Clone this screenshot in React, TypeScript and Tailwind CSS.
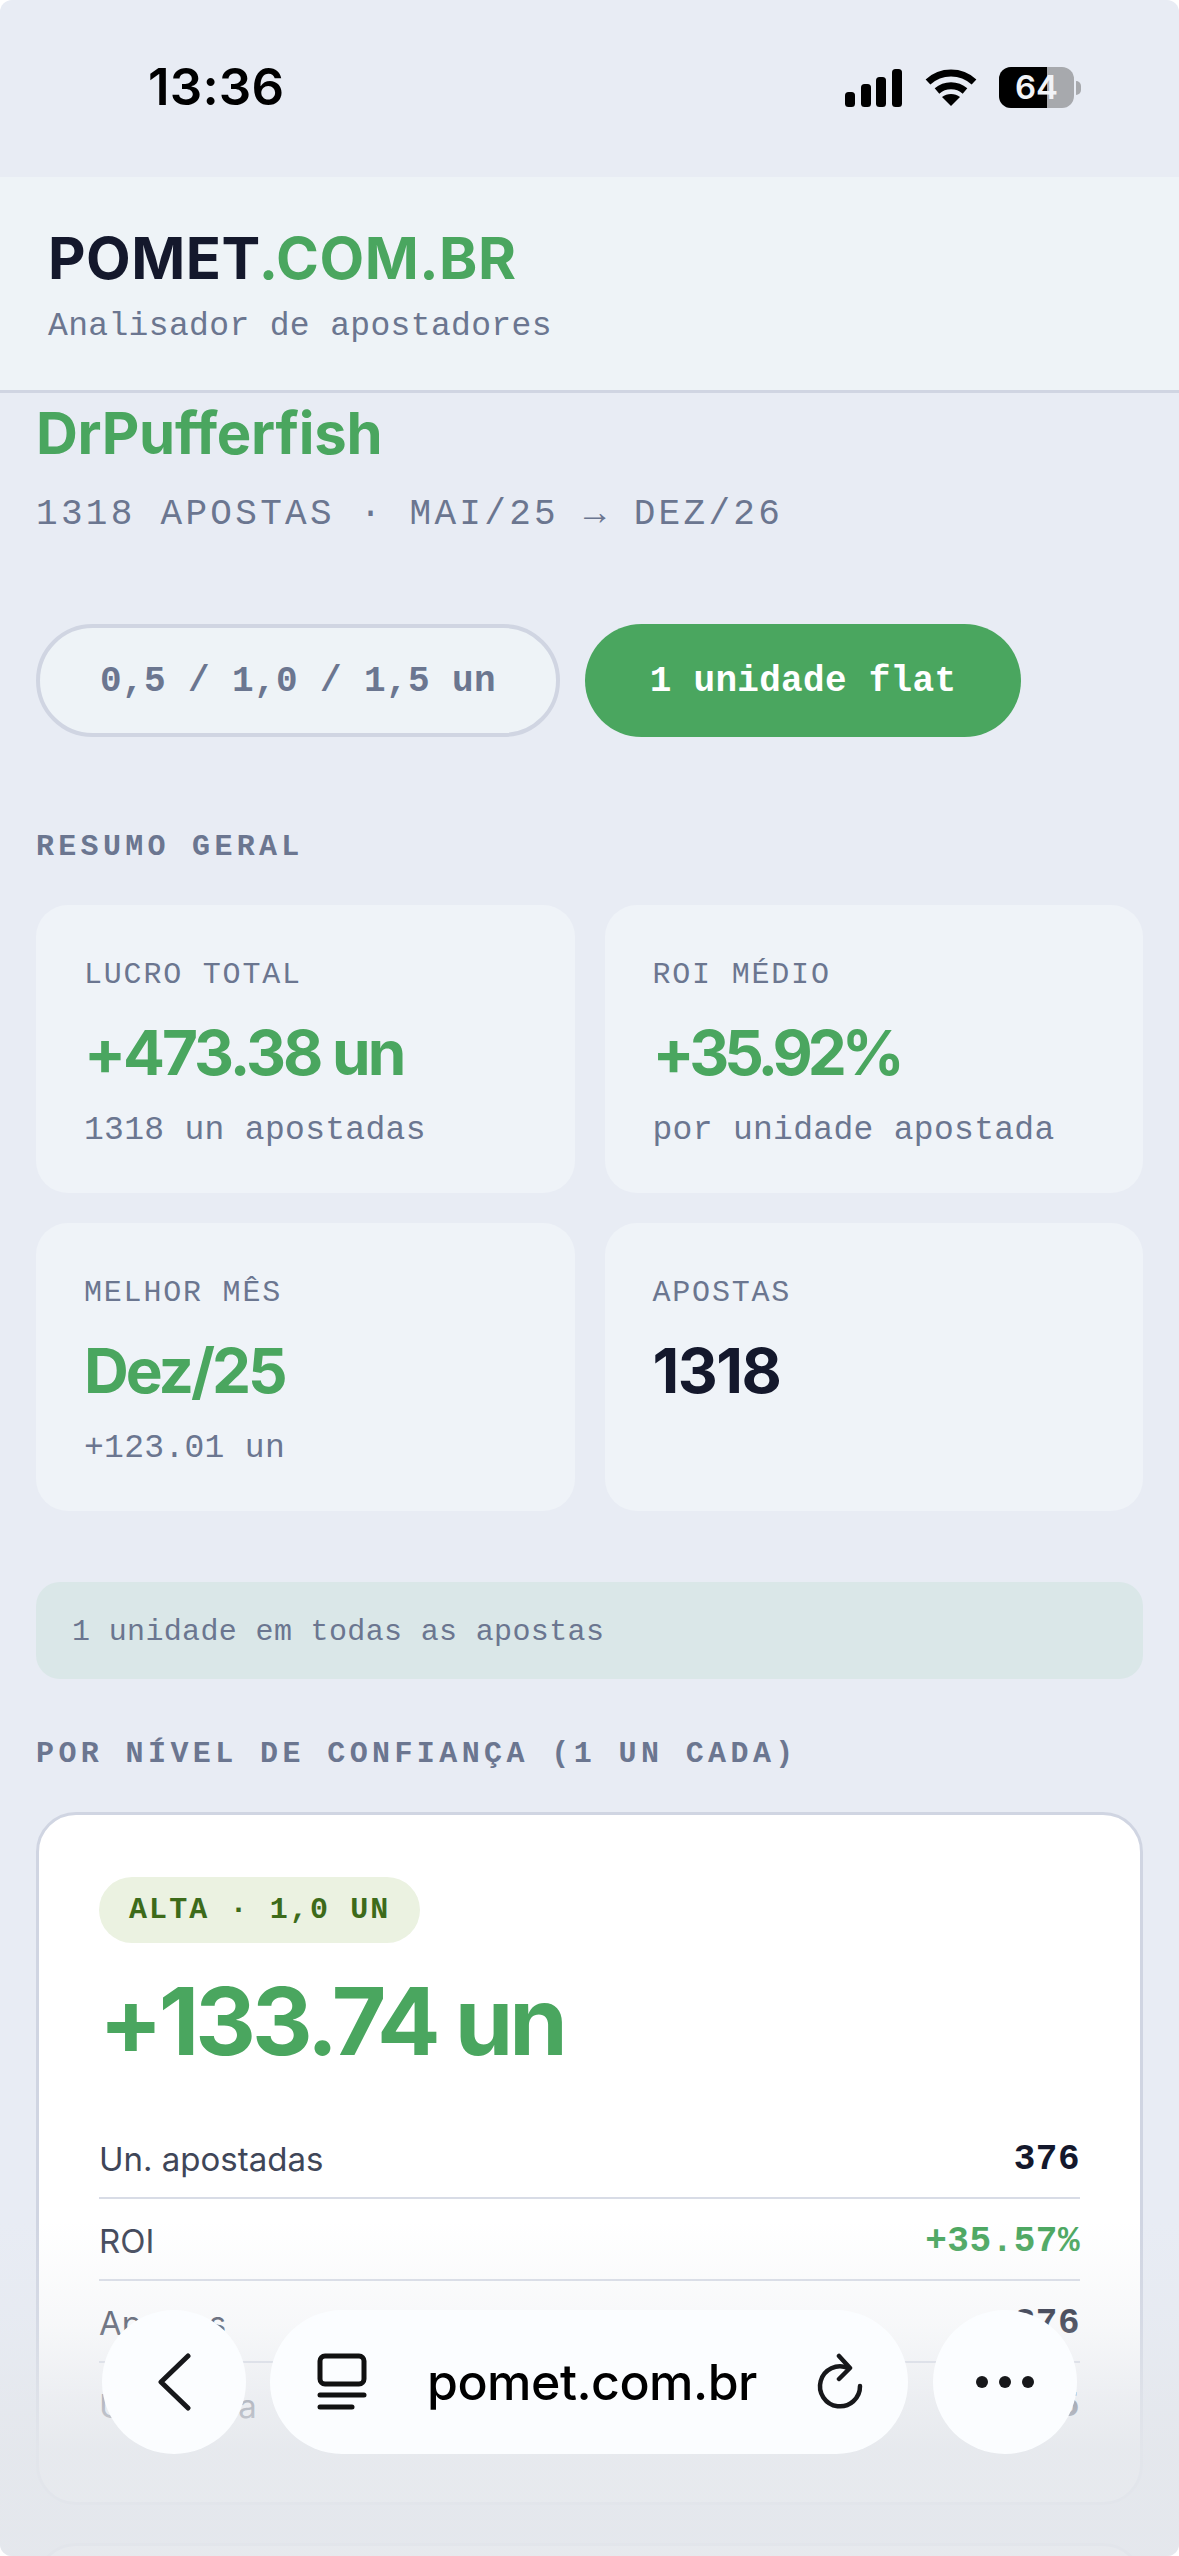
const sans = "font-['Inter','Liberation_Sans',sans-serif]";
const mono = "font-['Liberation_Mono','DejaVu_Sans_Mono',monospace]";

function StatCard({ label, value, sub, valueClass }: { label: string; value: string; sub?: string; valueClass: string }) {
  return (
    <div className="h-[288px] rounded-[32px] bg-[#eff3f8] pl-[48px] pt-[52px]">
      <div className={`${mono} text-[30px] leading-[36px] tracking-[1.8px] text-[#6b7690]`}>{label}</div>
      <div className={`${sans} mt-[24px] text-[62px] leading-[72px] font-bold ${valueClass}`}>{value}</div>
      {sub && <div className={`${mono} mt-[22px] text-[33px] leading-[40px] tracking-[0.3px] text-[#6b7690]`}>{sub}</div>}
    </div>
  );
}

function Row({ label, value, green, last }: { label: string; value: string; green?: boolean; last?: boolean }) {
  return (
    <div className={`flex h-[82px] items-center justify-between pt-[5px] ${last ? "" : "border-b-2 border-[#d8dce6]"}`}>
      <span className={`${sans} text-[33px] text-[#3f4658]`}>{label}</span>
      <span className={`${mono} text-[36px] font-bold tracking-[0.5px] ${green ? "text-[#4aa65f]" : "text-[#14182c]"}`}>{value}</span>
    </div>
  );
}

export default function App() {
  return (
    <div className="bg-white">
      <div className="relative h-[2556px] overflow-hidden rounded-[12px] bg-[#e8ecf4]">
        {/* status bar */}
        <div className="relative flex h-[177px] items-start justify-between pl-[148px] pr-[98px] pt-[55px]">
          <span className={`${sans} text-[51px] leading-[64px] font-semibold tracking-[0.2px] text-black`}>13:36</span>
          <div className="flex items-center gap-[22px] pt-[12px]">
            <svg width="58" height="38" viewBox="0 0 58 38" fill="black">
              <rect x="0" y="23" width="10" height="15" rx="3.5" />
              <rect x="16" y="15" width="10" height="23" rx="3.5" />
              <rect x="31" y="8" width="10" height="30" rx="3.5" />
              <rect x="47" y="0" width="10" height="38" rx="3.5" />
            </svg>
            <svg width="52" height="38" viewBox="0 0 52 38" fill="none" stroke="black" strokeWidth="7">
              <path d="M3 13 C16 1 36 1 49 13" />
              <path d="M12 22 C20 15 32 15 40 22" />
              <path d="M26 37 L17 28 C22 24 30 24 35 28 Z" fill="black" stroke="none" />
            </svg>
            <div className="flex items-center gap-[2px]">
              <div className="relative flex h-[41px] w-[75px] overflow-hidden rounded-[12px] bg-[#a7a9ad]">
                <div className="h-full w-[48px] bg-black" />
                <span className={`${sans} absolute inset-0 text-center text-[33px] leading-[41px] font-semibold text-[#f1f3f7]`}>64</span>
              </div>
              <div className="h-[14px] w-[5px] rounded-r-full bg-[#a7a9ad]" />
            </div>
          </div>
        </div>

        {/* header */}
        <header className="h-[216px] border-b-[3px] border-[#d0d5e2] bg-[#eef3f7] pl-[48px] pt-[46px]">
          <div className={`${sans} text-[58px] leading-[70px] font-bold tracking-[0.5px] text-[#14182c]`}>
            POMET<span className="text-[#4aa65f]">.COM.BR</span>
          </div>
          <div className={`${mono} mt-[14px] text-[33px] leading-[40px] tracking-[0.35px] text-[#6b7690]`}>Analisador de apostadores</div>
        </header>

        <main className="px-[36px]">
          <h1 className={`${sans} mt-[7px] text-[58px] leading-[66px] font-bold tracking-[-0.3px] text-[#4aa65f]`}>DrPufferfish</h1>
          <p className={`${mono} mt-[27px] text-[36px] leading-[44px] tracking-[3.3px] text-[#6b7690]`}>1318 APOSTAS · MAI/25 → DEZ/26</p>

          <div className="mt-[87px] flex gap-[25px]">
            <button className={`${mono} h-[113px] w-[524px] rounded-full border-[4px] border-[#d0d5e2] bg-[#eef3f7] pt-[2px] text-[36px] font-bold tracking-[0.4px] text-[#6b7690]`}>
              0,5 / 1,0 / 1,5 un
            </button>
            <button className={`${mono} h-[113px] w-[436px] rounded-full bg-[#4aa65f] pt-[2px] text-[36px] font-bold tracking-[0.3px] text-white`}>1 unidade flat</button>
          </div>

          <h2 className={`${mono} mt-[92px] text-[30px] leading-[36px] font-bold tracking-[4.3px] text-[#6b7690]`}>RESUMO GERAL</h2>

          <div className="mt-[40px] grid grid-cols-2 gap-[30px]">
            <StatCard label="LUCRO TOTAL" value="+473.38 un" sub="1318 un apostadas" valueClass="tracking-[-3px] text-[#4aa65f]" />
            <StatCard label="ROI MÉDIO" value="+35.92%" sub="por unidade apostada" valueClass="tracking-[-5px] text-[#4aa65f]" />
            <StatCard label="MELHOR MÊS" value="Dez/25" sub="+123.01 un" valueClass="tracking-[-3px] text-[#4aa65f]" />
            <StatCard label="APOSTAS" value="1318" valueClass="tracking-[-1.5px] text-[#14182c]" />
          </div>

          <div className={`${mono} mt-[71px] flex h-[97px] items-center rounded-[24px] bg-[#dae7e8] pl-[36px] pt-[3px] text-[30px] tracking-[0.35px] text-[#6b7690]`}>
            1 unidade em todas as apostas
          </div>

          <h2 className={`${mono} mt-[57px] text-[30px] leading-[36px] font-bold tracking-[4.4px] text-[#6b7690]`}>POR NÍVEL DE CONFIANÇA (1 UN CADA)</h2>

          <section className="mt-[40px] h-[693px] rounded-[40px] border-[3px] border-[#d0d5e2] bg-white px-[60px] pt-[62px]">
            <span className={`${mono} inline-block h-[66px] rounded-full bg-[#ebf2e1] px-[30px] text-[30px] leading-[66px] font-bold tracking-[2.1px] text-[#3d6b1a]`}>
              ALTA · 1,0 UN
            </span>
            <div className={`${sans} mt-[23px] text-[94px] leading-[110px] font-bold tracking-[-4px] text-[#4aa65f]`}>+133.74 un</div>
            <div className="mt-[41px]">
              <Row label="Un. apostadas" value="376" />
              <Row label="ROI" value="+35.57%" green />
              <Row label="Apostas" value="376" />
              <Row label="Un. média" value="1.05" last />
            </div>
          </section>

          <div className="mt-[38px] h-[100px] rounded-[40px] border-[3px] border-[#d0d5e2] bg-white" />
        </main>

        {/* browser toolbar over the page */}
        <div className="pointer-events-none absolute inset-x-0 bottom-0 h-[356px] bg-[linear-gradient(to_bottom,rgba(228,231,236,0)_6%,rgba(228,231,236,0.3)_35%,rgba(228,231,236,0.71)_56%,rgba(228,231,236,0.9)_70%)]" />
        <div className="absolute left-[102px] top-[2310px] flex h-[144px] w-[144px] items-center justify-center rounded-full bg-[#fbfdff]">
          <svg width="34" height="58" viewBox="0 0 34 58" fill="none" stroke="#17181b" strokeWidth="5" strokeLinecap="round" strokeLinejoin="round">
            <path d="M31 3 L4 29 L31 55" />
          </svg>
        </div>
        <div className="absolute left-[270px] top-[2310px] flex h-[144px] w-[638px] items-center rounded-full bg-[#fbfdff]">
          <svg className="ml-[47px]" width="50" height="58" viewBox="0 0 50 58" fill="none" stroke="#111" strokeWidth="5" strokeLinecap="round">
            <rect x="3" y="3" width="44" height="28" rx="5" />
            <path d="M3 42 H47" />
            <path d="M3 54 H35" />
          </svg>
          <span className={`${sans} ml-[60px] text-[50px] font-medium tracking-[-0.5px] text-black`}>pomet.com.br</span>
          <svg className="ml-[58px]" width="48" height="58" viewBox="0 0 48 58" fill="none" stroke="#17181b" strokeWidth="4.5" strokeLinecap="round" strokeLinejoin="round">
            <path d="M33 15 A20 20 0 1 0 45 33" />
            <path d="M24 3 L35 15 L24 26" />
          </svg>
        </div>
        <div className="absolute left-[933px] top-[2310px] flex h-[144px] w-[144px] items-center justify-center gap-[11px] rounded-full bg-[#fbfdff]">
          <span className="h-[12px] w-[12px] rounded-full bg-[#17181b]" />
          <span className="h-[12px] w-[12px] rounded-full bg-[#17181b]" />
          <span className="h-[12px] w-[12px] rounded-full bg-[#17181b]" />
        </div>
      </div>
    </div>
  );
}
